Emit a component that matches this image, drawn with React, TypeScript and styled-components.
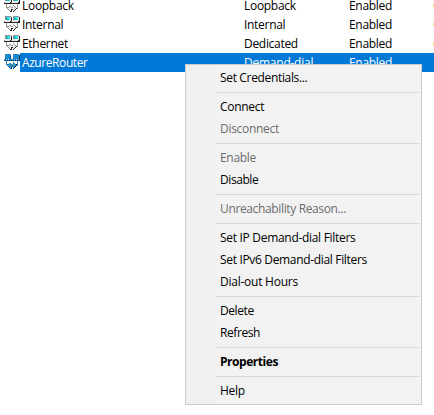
import React from 'react';
import styled, { createGlobalStyle } from 'styled-components';

const Global = createGlobalStyle`
  html, body { margin: 0; background: #fff; overflow: hidden; }
  body { font: 12px/19px "Open Sans", "Noto Sans", sans-serif; color: #000; }
`;

const Screen = styled.main`
  position: relative;
  display: flow-root;
  width: 434px;
  height: 415px;
  overflow: hidden;
`;

const Table = styled.div`
  margin-top: -4px;
`;

const Row = styled.div`
  display: flex;
  height: 19px;
`;

const IconCell = styled.div`
  box-sizing: border-box;
  width: 20px;
  flex: none;
  padding: 1px 0 0 4px;
`;

const Glyph = styled.svg`
  display: block;
  width: 16px;
  height: 16px;
`;

const Cells = styled.div<{ $selected?: boolean }>`
  display: grid;
  grid-template-columns: 222px 105px 1fr 1px;
  flex: 1;
  background: ${p => (p.$selected ? '#0078d7' : 'transparent')};
  color: ${p => (p.$selected ? '#fff' : '#000')};
`;

const Cell = styled.span`
  padding-left: 2px;
  white-space: nowrap;
`;

const Label = styled.span<{ $spacing?: number }>`
  letter-spacing: ${p => p.$spacing ?? -0.3}px;
`;

const Tick = styled.i`
  height: 3px;
  margin-top: 8px;
  background: #f7d774;
`;

const Menu = styled.div`
  position: absolute;
  left: 185px;
  top: 64px;
  box-sizing: border-box;
  width: 237px;
  height: 341px;
  padding: 2px;
  border: 1px solid #ccc;
  background: linear-gradient(to right, #f0f0f0 30px, #f2f2f2 30px);
`;

const Item = styled.div<{ $disabled?: boolean; $bold?: boolean }>`
  height: 22px;
  padding-left: 32px;
  line-height: 22px;
  white-space: nowrap;
  color: ${p => (p.$disabled ? '#6d6d6d' : '#000')};
  font-weight: ${p => (p.$bold ? 700 : 400)};
`;

const Separator = styled.hr`
  height: 1px;
  margin: 3px 0 3px 28px;
  border: 0;
  background: #d7d7d7;
`;

const rows = [
  { name: 'Loopback', type: 'Loopback' },
  { name: 'Internal', type: 'Internal' },
  { name: 'Ethernet', type: 'Dedicated' },
  { name: 'AzureRouter', type: 'Demand-dial', nameSpacing: -0.42, typeSpacing: -0.24 },
];

type Entry = { text: string; disabled?: boolean; bold?: boolean; spacing?: number };
const groups: Entry[][] = [
  [{ text: 'Set Credentials...', spacing: -0.34 }],
  [{ text: 'Connect' }, { text: 'Disconnect', disabled: true }],
  [{ text: 'Enable', disabled: true }, { text: 'Disable', spacing: -0.42 }],
  [{ text: 'Unreachability Reason...', disabled: true, spacing: -0.36 }],
  [
    { text: 'Set IP Demand-dial Filters' },
    { text: 'Set IPv6 Demand-dial Filters', spacing: -0.33 },
    { text: 'Dial-out Hours', spacing: -0.24 },
  ],
  [{ text: 'Delete', spacing: -0.42 }, { text: 'Refresh', spacing: -0.42 }],
  [{ text: 'Properties', bold: true, spacing: -0.45 }],
  [{ text: 'Help' }],
];

/* Pixel rows of the two linked computers; each letter is a palette key. */
const pixels = [
  '.gggggg..gggggg.',
  '.gtcccwk.gtcccwk',
  '.gttccwk.gttccwk',
  '.gtttcwk.gtttcwk',
  '.wwwwwwk.wwwwwwk',
  'gwwwwwkgwwwwwwkk',
  'kkkkkkkkkkkkkkkk',
  '..g..........g..',
  '..g......g...g..',
  '..g..gg..wg..g..',
  '..gggwwggwwg.g..',
  '...gwwwwwwwwkg..',
  '....gwwkkwwk....',
  '.....gwk.wk.....',
  '......kk.k......',
];
const selectedPixels = [
  '.bsbsbs..bsbsbs.',
  '.sbtbtb..sbtbtbk',
  '.btbtbk..btbtbsk',
  '.sbtbtb..sbtbtbk',
  '.bsbsbk..bsbsbsk',
  'sbwbwbsbsbwbwbsk',
  'bkbkbkbkbkbkbkbk',
  '..s..........s..',
  '..b......s...b..',
  '..s..sb..bs..s..',
  '..bsbtbssotbkb..',
  '...btobtbtobks..',
  '....sbobktbk....',
  '.....bsk.bk.....',
  '......bk.k......',
];
const palette: Record<string, string> = {
  g: '#929292', k: '#252525', w: '#e8e8e8', c: '#35edf0', t: '#12b7bd',
};
const selectedPalette: Record<string, string> = {
  b: '#0078d7', s: '#5689ae', k: '#143c5c', w: '#a9cbe6', t: '#20a5cf', o: '#909b54',
};

function LinkIcon({ selected }: { selected: boolean }) {
  const colors = selected ? selectedPalette : palette;
  const lines = selected ? selectedPixels : pixels;
  return (
    <Glyph viewBox="0 0 16 16" shapeRendering="crispEdges" aria-hidden="true">
      {lines.flatMap((line, y) =>
        [...line].map((key, x) =>
          key === '.' ? null : (
            <rect key={`${x}-${y}`} x={x} y={y} width="1" height="1" fill={colors[key]} />
          ),
        ),
      )}
    </Glyph>
  );
}

export default function App() {
  return (
    <Screen>
      <Global />
      <Table>
        {rows.map((row, i) => (
          <Row key={row.name}>
            <IconCell><LinkIcon selected={i === 3} /></IconCell>
            <Cells $selected={i === 3}>
              <Cell><Label $spacing={row.nameSpacing}>{row.name}</Label></Cell>
              <Cell><Label $spacing={row.typeSpacing}>{row.type}</Label></Cell>
              <Cell><Label>Enabled</Label></Cell>
              {i < 3 && <Tick />}
            </Cells>
          </Row>
        ))}
      </Table>
      <Menu>
        {groups.map((group, i) => (
          <React.Fragment key={i}>
            {i > 0 && <Separator />}
            {group.map(e => (
              <Item key={e.text} $disabled={e.disabled} $bold={e.bold}>
                <Label $spacing={e.spacing}>{e.text}</Label>
              </Item>
            ))}
          </React.Fragment>
        ))}
      </Menu>
    </Screen>
  );
}
